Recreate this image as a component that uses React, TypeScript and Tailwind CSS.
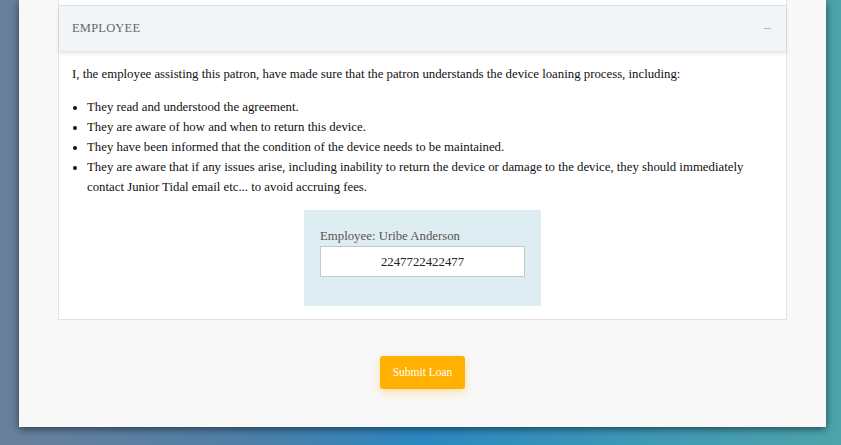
import React from 'react';

const bullets = [
  'They read and understood the agreement.',
  'They are aware of how and when to return this device.',
  'They have been informed that the condition of the device needs to be maintained.',
  'They are aware that if any issues arise, including inability to return the device or damage to the device, they should immediately contact Junior Tidal email etc... to avoid accruing fees.',
];

const App: React.FC = () => {
  return (
    <div
      className="h-[445px] w-full overflow-hidden bg-[linear-gradient(to_right,#6a809d_0%,#4d7fa8_30%,#2a88c1_50%,#3c98b6_75%,#4ea4ab_100%)]"
      style={{ fontFamily: '"Liberation Serif", "Times New Roman", serif' }}
    >
      <div className="ml-[19px] flex h-[427px] w-[807px] flex-col bg-[#f8f8f8] px-[39px] shadow-[0_2px_8px_rgba(0,0,0,0.55)]">
        {/* previous card edge */}
        <div className="h-[6px] w-[729px] border-x border-b border-[#e3e3e3] bg-white"></div>

        <div className="w-[729px] border-x border-[#e3e3e3] bg-white">
          <div className="relative flex h-[45px] items-center justify-between bg-[#f1f5f8] px-[13px] shadow-[0_2px_4px_rgba(0,0,0,0.13)]">
            <span className="text-[12.5px] tracking-[0.2px] text-[#666]">EMPLOYEE</span>
            <span className="mr-[2px] h-px w-[7px] bg-[#b5b5b5]"></span>
          </div>

          <div className="px-[13px] pb-[13px] pt-[13px] text-[12.8px] leading-[20px] text-[#111]">
            <p>I, the employee assisting this patron, have made sure that the patron understands the device loaning process, including:</p>
            <ul className="mt-[13px] list-disc pl-[15px]">
              {bullets.map((b) => (
                <li key={b} className="pr-[10px]">{b}</li>
              ))}
            </ul>

            <div className="mt-[13px] flex justify-center">
              <div className="w-[237px] bg-[#deedf2] px-[16px] pb-[29px] pt-[18px]">
                <div className="text-[12.8px] leading-[16px] text-[#555]">Employee: Uribe Anderson</div>
                <div className="mt-[2px] flex h-[31px] items-center justify-center border border-[#c8c8c8] bg-white text-[12.8px] text-[#222]">
                  2247722422477
                </div>
              </div>
            </div>
          </div>
        </div>
        <div className="h-px w-[729px] bg-[#e3e3e3]"></div>

        <div className="mt-[36px] flex justify-center">
          <button className="h-[33px] w-[85px] rounded-[3px] bg-[#ffb000] text-[11.5px] text-white shadow-[0_3px_8px_rgba(255,176,0,0.35)]">
            Submit Loan
          </button>
        </div>
      </div>
    </div>
  );
};

export default App;
